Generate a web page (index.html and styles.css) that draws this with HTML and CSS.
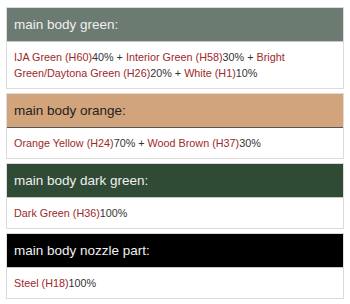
FILE: index.html
```html
<!DOCTYPE html>
<html>
<head>
<meta charset="utf-8">
<link rel="stylesheet" href="styles.css">
</head>
<body>
<div class="list">
  <div class="card">
    <div class="head head-green">main body green:</div>
    <div class="body"><span class="c">IJA Green (H60)</span>40% + <span class="c">Interior Green (H58)</span>30% + <span class="c">Bright Green/Daytona Green (H26)</span>20% + <span class="c">White (H1)</span>10%</div>
  </div>
  <div class="card">
    <div class="head head-orange">main body orange:</div>
    <div class="body"><span class="c">Orange Yellow (H24)</span>70% + <span class="c">Wood Brown (H37)</span>30%</div>
  </div>
  <div class="card">
    <div class="head head-dark">main body dark green:</div>
    <div class="body"><span class="c">Dark Green (H36)</span>100%</div>
  </div>
  <div class="card">
    <div class="head head-black">main body nozzle part:</div>
    <div class="body"><span class="c">Steel (H18)</span>100%</div>
  </div>
</div>
</body>
</html>
```

FILE: styles.css
```css
html, body {
  margin: 0;
  padding: 0;
  background: #fff;
}
body {
  font-family: "Liberation Sans", Arial, sans-serif;
}
.list {
  padding: 7px 6px;
  display: flex;
  flex-direction: column;
  gap: 4px;
}
.card {
  border: 1px solid #dcdcdc;
  background: #fff;
}
.head {
  font-size: 13.5px;
  line-height: 18px;
  padding: 8px 7px 7px;
  color: #f0f0f0;
  border-bottom: 1px solid #c8c8c8;
}
.head-green { background: #6c7b72; }
.head-orange { background: #d2a47b; color: #222; border-bottom-color: #555; }
.head-dark { background: #2f4a35; }
.head-black { background: #000; }
.body {
  font-size: 10.8px;
  line-height: 16px;
  padding: 7px;
  color: #333;
}
.c {
  color: #9c2a2a;
}
```
